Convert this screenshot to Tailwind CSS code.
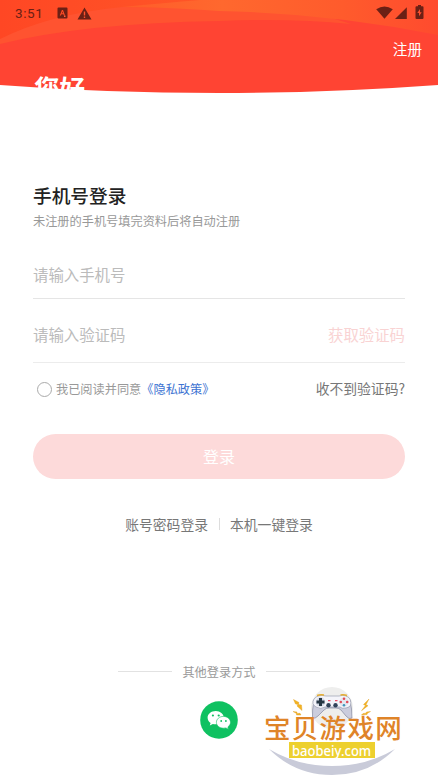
<!DOCTYPE html>
<html lang="zh-CN">
<head>
<meta charset="utf-8">
<meta name="viewport" content="width=device-width, initial-scale=1">
<title>手机号登录</title>
<script src="https://cdn.jsdelivr.net/npm/@tailwindcss/browser@4"></script>
</head>
<body class="bg-white">
<div class="relative flex h-[780px] w-[438px] flex-col overflow-hidden bg-white font-['Noto_Sans_CJK_SC',sans-serif] text-[#777]">
  <header class="relative isolate h-[94px] shrink-0 overflow-hidden">
    <svg class="absolute inset-0 -z-10" width="438" height="94" viewBox="0 0 438 94">
      <defs>
        <linearGradient id="right" x1="120" x2="438" y1="0" y2="0" gradientUnits="userSpaceOnUse"><stop stop-color="#ff5c29"/><stop offset=".32" stop-color="#ff682e"/><stop offset=".7" stop-color="#ff5b2c"/><stop offset="1" stop-color="#ff4b2e"/></linearGradient>
        <linearGradient id="left" x1="0" x2="200" y1="0" y2="0" gradientUnits="userSpaceOnUse"><stop stop-color="#ff4724"/><stop offset="1" stop-color="#ff5527"/></linearGradient>
      </defs>
      <path fill="#ff4433" d="M0 0H438V85Q330 93 219 93Q105 93 0 85Z"/>
      <path fill="url(#left)" d="M0 0H210V11H120Q60 16 0 40Z"/>
      <path fill="#ff5330" d="M0 44Q85 23 219 21Q290 18 351 24L300 8H219L122 7Q50 14 0 39Z"/>
      <path fill="url(#right)" d="M122 7Q165 3 200 0H438V35Q330 13 219 11Q160 7 122 7Z"/>
    </svg>
    <div class="flex h-[26px] items-center justify-between pr-[14px] pl-[15px] text-[#6b2015]">
      <div class="flex items-center font-[Roboto,sans-serif]">
        <span class="w-[42px] text-[13.5px] leading-[26px] tracking-[0.6px]">3:51</span>
        <svg width="11" height="12" viewBox="0 0 11 12"><path fill="currentColor" fill-rule="evenodd" d="M1.5 .5h8q1 0 1 1v9q0 1-1 1h-8q-1 0-1-1v-9q0-1 1-1ZM4.9 3 2.8 8.4H4l.4-1.2h2L6.8 8.4H8L6 3Zm.5 1.4.6 1.8H4.8Z"/><path fill="#ff6040" d="M7 8.500h1.500V10H7z"/></svg>
        <svg class="ml-[9px]" width="15" height="13" viewBox="0 0 15 13"><path fill="currentColor" fill-rule="evenodd" d="M7.500.5 14.500 12.500H.5ZM6.800 4.500v4h1.400v-4Zm0 5v1.400h1.400V9.500Z"/></svg>
      </div>
      <div class="flex items-center pb-[2px]">
        <svg width="17" height="13" viewBox="0 0 17 13"><path fill="currentColor" d="M.2 3.200Q8.500-2.200 16.800 3.200L8.500 12.800Z"/></svg>
        <svg class="mt-[1px] ml-[2px]" width="12" height="12" viewBox="0 0 12 12"><path fill="currentColor" d="M11.800.2V12H0Z"/></svg>
        <svg class="ml-[8px]" width="9" height="14" viewBox="0 0 9 14"><path fill="currentColor" fill-rule="evenodd" d="M3 0h3v1.200h1.500q1 0 1 1V13q0 1-1 1h-6q-1 0-1-1V2.200q0-1 1-1H3ZM5 4 2.300 8H4v3.300L6.700 7.200H5Z"/></svg>
      </div>
    </div>
    <div class="flex h-[45px] items-center justify-end pr-4">
      <a class="text-[14.6px] leading-5 text-white">注册</a>
    </div>
    <h1 class="h-[19px] overflow-hidden pl-[34px] text-[25.5px] leading-[32px] font-bold text-white">您好</h1>
  </header>

  <main class="flex flex-col px-[33px] pt-[87px]">
    <h2 class="text-[18.7px] leading-[28px] font-medium text-[#222]">手机号登录</h2>
    <p class="mt-[2px] text-[12.2px] leading-[20px] text-[#999]">未注册的手机号填完资料后将自动注册</p>
    <div class="mt-[21px] flex h-[47px] items-center border-b border-[#e5e5e5] text-[15.4px] text-[#bbb]">请输入手机号</div>
    <div class="flex h-[64px] items-center justify-between border-b border-[#ececec] pt-[9px] text-[15.4px] text-[#bbb]">
      <span>请输入验证码</span><span class="text-[#f9d3d3]">获取验证码</span>
    </div>
    <div class="flex h-[53px] items-center text-[12.2px]">
      <span class="mr-[4px] ml-[4px] size-[15px] rounded-full border border-[#aaa]"></span>
      <span class="text-[#999]">我已阅读并同意</span><a class="text-[#3d73d2]">《隐私政策》</a>
      <a class="ml-auto pb-[2px] text-[13.8px] text-[#777]">收不到验证码?</a>
    </div>
    <button class="mt-[18px] h-[45px] rounded-full bg-[#fddada] pb-px text-[16px] text-white">登录</button>
    <div class="mt-[35px] flex h-5 items-center justify-center text-[13.8px] leading-5">
      <a>账号密码登录</a><span class="mx-[10.5px] h-3 w-px bg-[#ddd]"></span><a>本机一键登录</a>
    </div>
  </main>

  <footer class="mt-[127px] flex flex-col items-center">
    <div class="flex h-5 items-center gap-[10px] text-[12.2px] leading-5 text-[#999]">
      <span class="h-px w-[54px] bg-[#e2e2e2]"></span><span class="pt-px">其他登录方式</span><span class="h-px w-[54px] bg-[#e2e2e2]"></span>
    </div>
    <svg class="mt-[20px]" width="38" height="38" viewBox="0 0 38 38">
      <circle cx="19" cy="19" r="18.800" fill="#0fc161"/>
      <path fill="#fff" d="M15.800 10c-4.600 0-8.200 2.900-8.200 6.700 0 2.200 1.200 4 3 5.200l-.8 2.500 3-1.500c1 .3 2 .4 3 .4 4.400 0 8-2.900 8-6.600S20.200 10 15.800 10Z"/>
      <path fill="#fff" stroke="#0fc161" stroke-width=".6" d="M23.400 15.400c4 0 7.100 2.600 7.100 5.900 0 1.900-1 3.500-2.600 4.600l.6 2.300-2.700-1.300c-.8.200-1.600.3-2.400.3-3.900 0-7-2.700-7-5.900s3.100-5.900 7-5.900Z"/>
      <g fill="#0fc161"><circle cx="12.900" cy="14.500" r="1.100"/><circle cx="18.700" cy="14.500" r="1.100"/><circle cx="21.200" cy="20" r=".9"/><circle cx="25.900" cy="20" r=".9"/></g>
    </svg>
  </footer>

  <!-- Site badge floating over the page corner -->
  <div class="absolute top-[680px] left-[255px] h-[100px] w-[160px]">
    <svg class="absolute inset-0" width="160" height="100" viewBox="0 0 160 100">
      <circle cx="77" cy="28" r="21" fill="#eeeeed"/>
      <path fill="#c9cbd9" d="M14 69Q42 86 77 86Q112 86 140 69Q114 95 77 95Q40 95 14 69Z"/>
      <path fill="#cbcddd" stroke="#858a9f" stroke-width=".7" d="M59 20Q57 31 57.500 38 60 39 63 36L69 30Q71 28 74 28H81Q84 28 86 30L91 36Q94 40 97 38 97 29 95 20Z"/>
      <path fill="#f4f4fa" stroke="#8b90a5" stroke-width=".6" d="M59 19Q63 14 71 16H84Q91 14 95 19 98 27 91 28 87 29 85 27H70Q66 30 61 27 56 24 59 19Z"/>
      <path fill="none" stroke="#e5ad31" stroke-width="1.500" d="M62 15.500Q65 14.300 69 15M85.500 15Q89 14.300 92 15.500"/>
      <circle cx="65.500" cy="22" r="4.700" fill="#d5dae6"/><circle cx="89" cy="22" r="4.700" fill="#e6e8f0"/>
      <path fill="#263744" d="M64 18h3v2.500h2.500v3H67V26h-3v-2.500h-2.500v-3H64z"/>
      <g fill="#31435a"><circle cx="73.500" cy="25.300" r="2.200"/><circle cx="80.500" cy="25.300" r="2.200"/></g>
      <path fill="#e84c66" d="M73 20h2.500v1.200H73zM80 20h2.500v1.200H80z"/>
      <g fill="#e14c59"><circle cx="89" cy="18.800" r="1.300"/><circle cx="92.200" cy="22" r="1.300"/><circle cx="85.800" cy="22" r="1.300"/></g><circle cx="89" cy="25.200" r="1.300" fill="#4295bb"/>
      <g fill="#f4b321" stroke="#dda024" stroke-width=".4"><path d="m38.500 19.500 5.500 3-.5 2 3 .5.5 5.500-5-4.500 1-1.500-2.500-.5ZM38 31.500l4 .5v1.500l3-.2 1 1.700-4.500 0v-1.500ZM114 19l-5.500 5.500 2 1-4 5.200 6.500-5-2-1ZM115.500 31.500l-4 .5-.5 1.200-3 .3-1.500 1.500 5.500-.5.500-1.300Z"/></g>
    </svg>
    <div class="absolute top-[35px] left-[9px] text-[26.5px] leading-[24px] font-medium tracking-[1.3px] whitespace-nowrap text-[#df8428]">宝贝游戏网</div>
    <div class="absolute top-[62px] left-[34px] flex h-[16px] w-[86px] items-center justify-center bg-[#edd02f] font-['Noto_Sans',sans-serif] text-[15px] leading-[14px] font-medium text-white"><span class="-mt-px scale-x-[0.87]">baobeiy.com</span></div>
  </div>
</div>
</body>
</html>
